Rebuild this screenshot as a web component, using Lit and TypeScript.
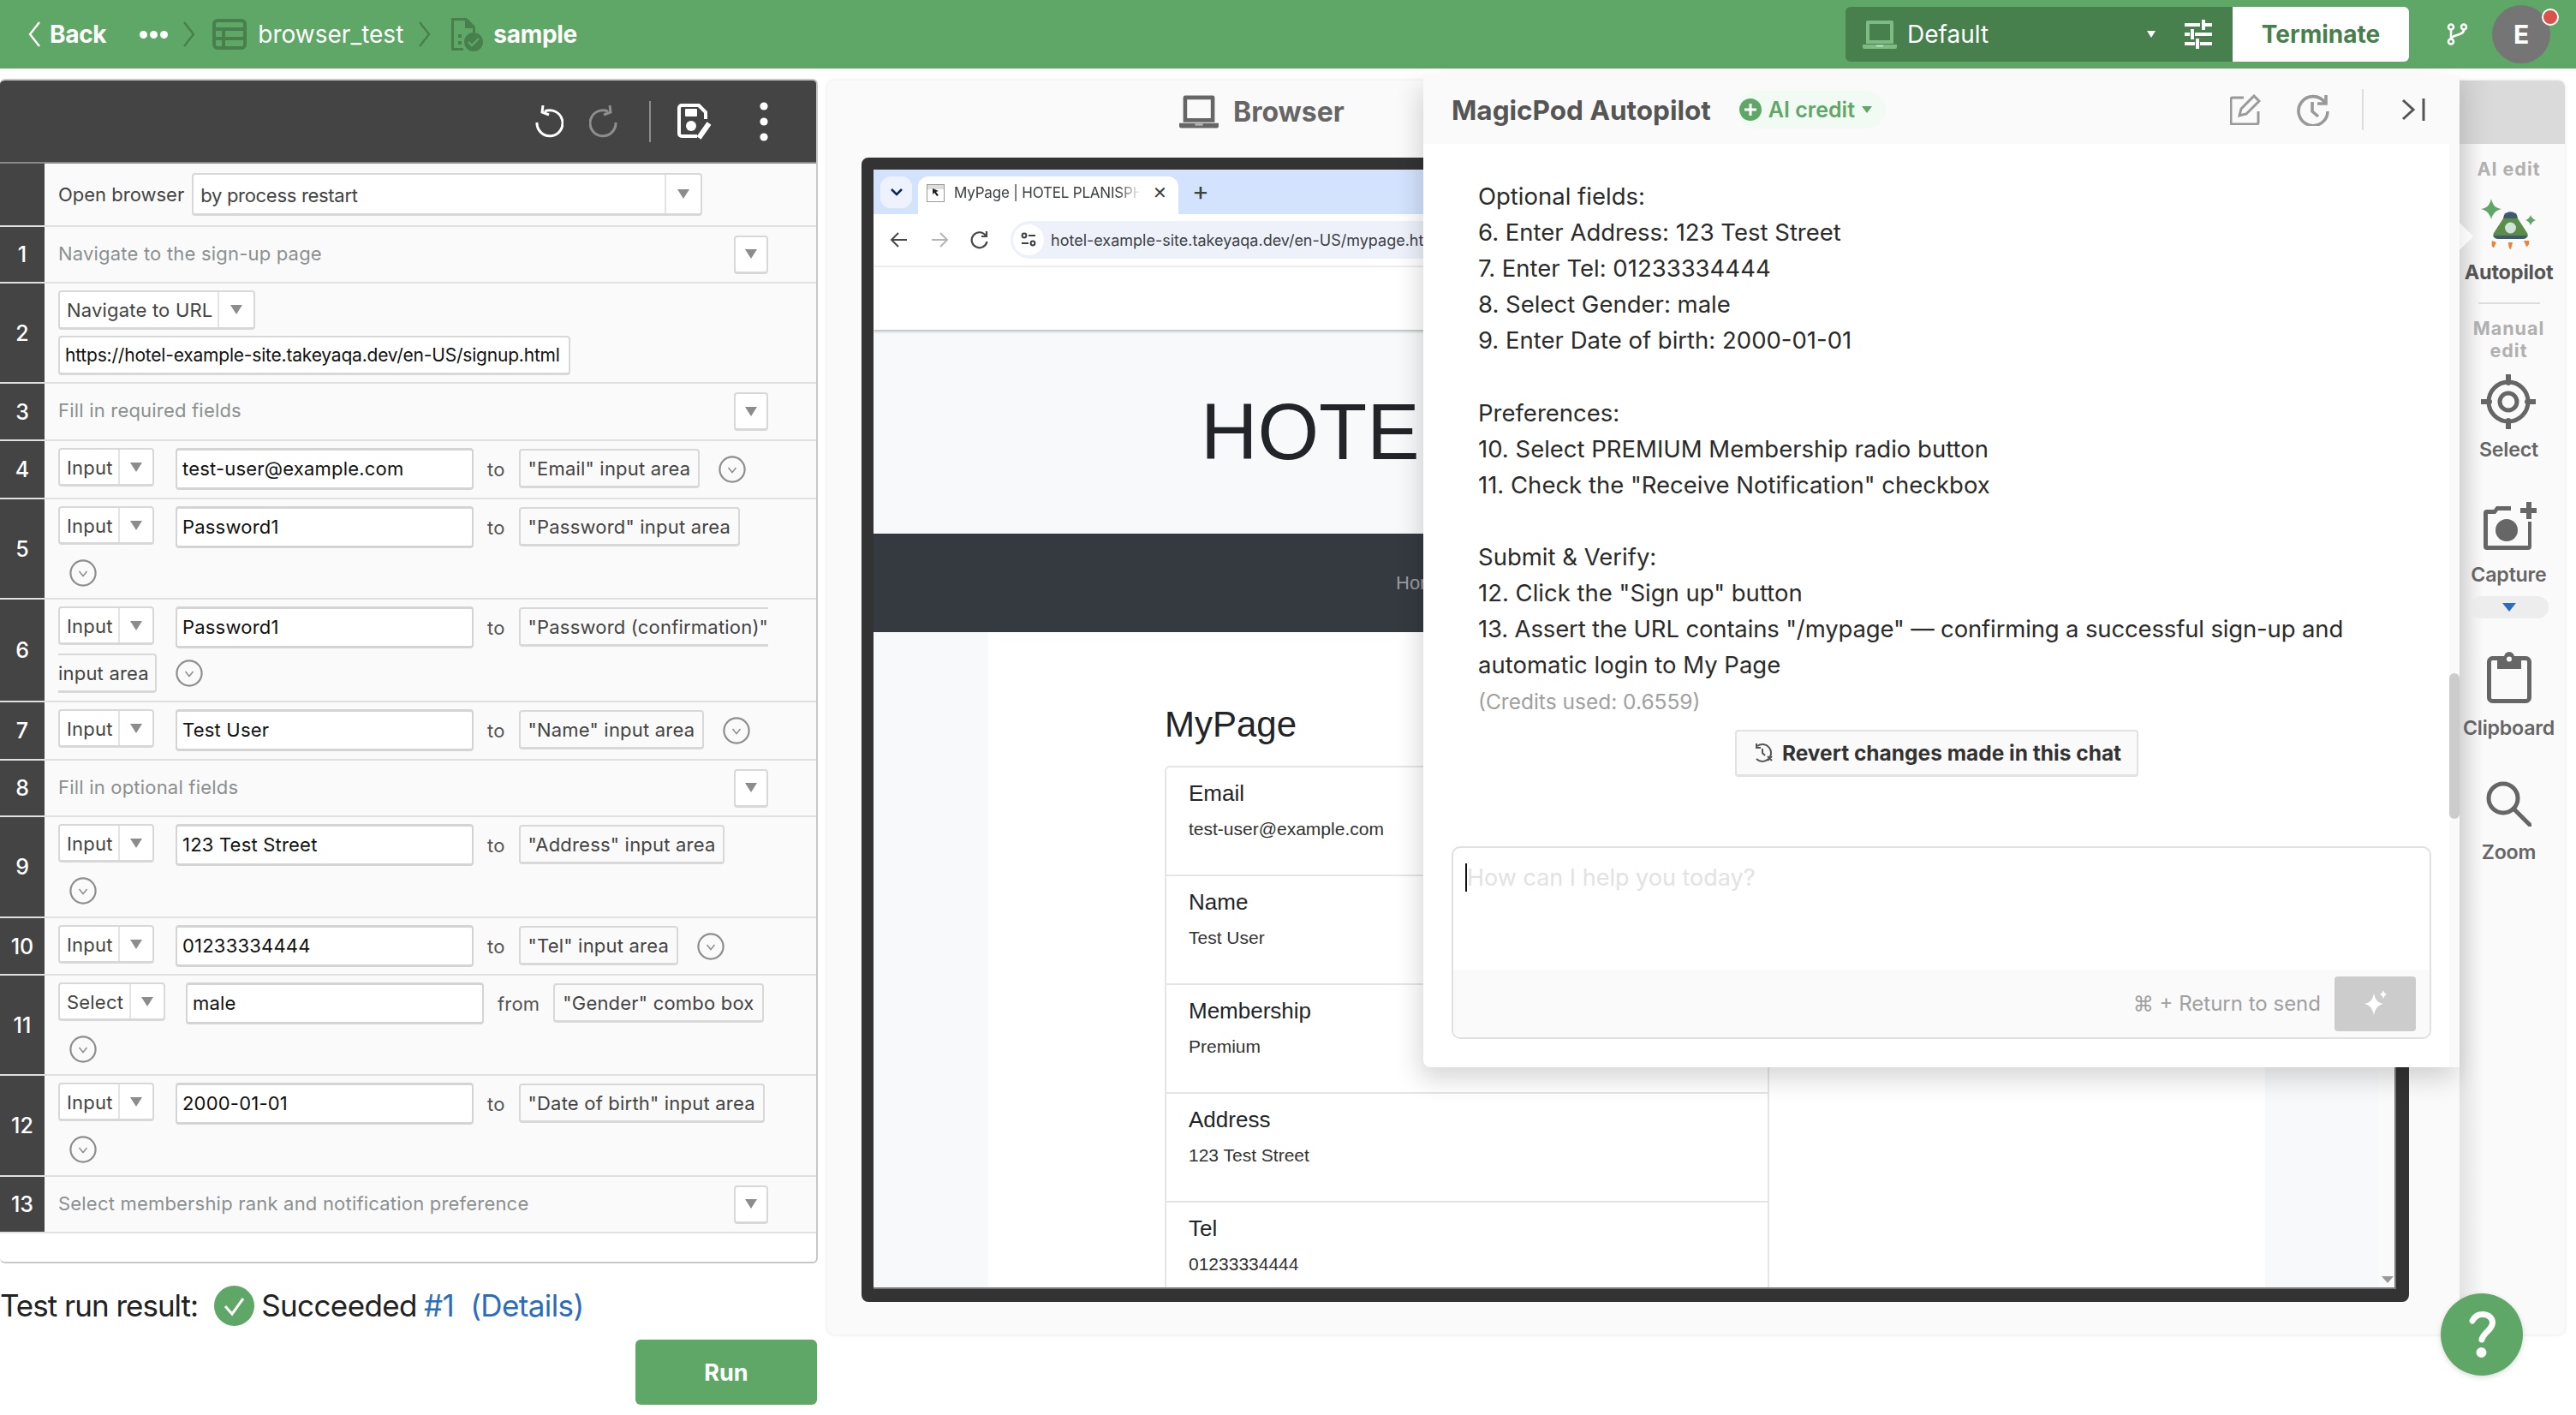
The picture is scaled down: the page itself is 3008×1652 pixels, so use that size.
import { LitElement, html, css, svg } from "lit";
import { customElement } from "lit/decorators.js";

type Cmd = {
  n: string;
  h: number;
  cmd: string;
  cmdW: number;
  value: string;
  word?: string;
  target: string;
};

const chevronRight = (c: string) => html`<svg class="crumb" width="16" height="34" viewBox="0 0 16 34" fill="none" stroke=${c} stroke-width="2.4"><path d="M2 3l11 14L2 31" /></svg>`;

const caret = html`<svg width="14" height="11" viewBox="0 0 14 11"><path d="M0 0h14L7 11z" fill="#8c8c8c" /></svg>`;

const circleDown = html`<svg class="circ" width="32" height="32" viewBox="0 0 32 32" fill="none" stroke="#8e8e8e"><circle cx="16" cy="16" r="14.6" stroke-width="2.2" /><path d="M11.5 14l4.5 5.5 4.5-5.5" stroke-width="1.5" /></svg>`;

const laptop = (c: string) => svg`<path d="M6 2h28a2 2 0 012 2v25H4V4a2 2 0 012-2zm2 4v19h24V6z" fill=${c} fill-rule="evenodd" /><path d="M0 30h40v3a2 2 0 01-2 2H2a2 2 0 01-2-2z" fill=${c} /><rect x="16" y="30.5" width="8" height="2" fill="#fff" opacity=".5" />`;

@customElement("step-row")
class StepRow extends LitElement {
  static properties = { data: { attribute: false } };
  data!: Cmd;

  static styles = css`
    :host {
      display: flex;
      border-bottom: 2px solid #e0e0e0;
      box-sizing: border-box;
      background: #fafafa;
    }
    .num {
      width: 52px;
      flex: none;
      background: #444;
      color: #fff;
      font: 500 25px Inter, sans-serif;
      display: flex;
      align-items: center;
      justify-content: center;
    }
    .body {
      flex: 1;
      box-sizing: border-box;
      display: flex;
      flex-wrap: wrap;
      align-content: flex-start;
      align-items: flex-start;
      padding: 8px 30px 0 16px;
      row-gap: 12px;
      min-width: 0;
      letter-spacing: 0.2px;
    }
    .body.split {
      row-gap: 4px;
    }
    .sel {
      height: 45px;
      box-sizing: border-box;
      border: 2px solid #d8d8d8;
      border-bottom-width: 3px;
      border-radius: 4px;
      background: #fff;
      display: flex;
      align-items: center;
      font-size: 22px;
      color: #444;
      padding: 2px 0 0 8px;
      position: relative;
      margin-right: 25px;
    }
    .sel.tight {
      margin-right: 24px;
    }
    .sel .arr {
      position: absolute;
      right: 0;
      top: 0;
      bottom: 0;
      width: 38px;
      border-left: 2px solid #e4e4e4;
      display: flex;
      align-items: center;
      justify-content: center;
    }
    .val {
      width: 348px;
      height: 49px;
      box-sizing: border-box;
      border: 2px solid #d4d4d4;
      border-top-width: 3px;
      border-bottom-width: 3px;
      border-radius: 4px;
      background: #fff;
      display: flex;
      align-items: center;
      padding: 0 0 2px 6px;
      color: #111;
      font-size: 22px;
    }
    .word {
      margin: 0 16px;
      color: #555;
      font-size: 22px;
      line-height: 50px;
    }
    .tgt {
      height: 46px;
      margin-top: 1px;
      box-sizing: border-box;
      border: 2px solid #d8d8d8;
      border-bottom-width: 3px;
      border-radius: 4px;
      display: flex;
      align-items: center;
      padding: 0 9px;
      color: #444;
      font-size: 22px;
      white-space: nowrap;
    }
    .tgt.first {
      border-right: none;
      border-radius: 4px 0 0 4px;
      width: 291px;
      padding-right: 0;
    }
    .tgt.second {
      border-left: none;
      border-radius: 0 4px 4px 0;
      padding-left: 0;
      width: 115px;
    }
    .circ {
      margin: 9px 0 0 22px;
    }
    .wrap-circ {
      flex-basis: 100%;
      height: 32px;
      display: flex;
      margin-left: 13px;
    }
    .wrap-circ .circ {
      margin: 0;
    }
    .split .circ {
      margin-top: 8px;
    }
  `;

  render() {
    const d = this.data;
    const split = d.n === "6";
    const wraps = ["5", "9", "11", "12"].includes(d.n);
    return html`
      <div class="num">${d.n}</div>
      <div class="body ${split ? "split" : ""}" style="height:${d.h}px">
        <div class="sel ${d.word === "from" ? "tight" : ""}" style="width:${d.cmdW}px">${d.cmd}<span class="arr">${caret}</span></div>
        <div class="val">${d.value}</div>
        <span class="word">${d.word ?? "to"}</span>
        ${split
          ? html`<div class="tgt first">"Password (confirmation)"</div>
              <div class="tgt second">input area</div>
              ${circleDown}`
          : html`<div class="tgt">${d.target}</div>`}
        ${!split && !wraps ? circleDown : ""}
        ${wraps ? html`<div class="wrap-circ">${circleDown}</div>` : ""}
      </div>
    `;
  }
}

@customElement("app-root")
export class AppRoot extends LitElement {
  static styles = css`
    :host {
      display: block;
      width: 3008px;
      height: 1652px;
      position: relative;
      overflow: hidden;
      background: #fff;
      font-family: Inter, "Noto Sans", sans-serif;
      color: #333;
    }
    /* top bar */
    .topbar {
      height: 80px;
      background: #5fa766;
      display: flex;
      align-items: center;
      color: #fff;
      font-size: 28px;
      padding-left: 32px;
      box-sizing: border-box;
    }
    .topbar b {
      font-weight: 700;
      letter-spacing: -0.3px;
    }
    .crumb {
      flex: none;
    }
    .back-label {
      margin-left: 10px;
    }
    .dots {
      margin: 0 17px 0 39px;
      display: flex;
      gap: 3px;
    }
    .dots i {
      width: 9px;
      height: 9px;
      border-radius: 50%;
      background: #fff;
    }
    .bt {
      margin: 0 17px 0 13px;
    }
    .grow {
      flex: 1;
    }
    .env {
      width: 452px;
      height: 64px;
      background: #47804d;
      border-radius: 6px 0 0 6px;
      display: flex;
      align-items: center;
      padding-left: 20px;
      box-sizing: border-box;
    }
    .env span {
      margin-left: 12px;
      font-size: 28px;
      flex: 1;
    }
    .env .tri {
      margin-right: 34px;
    }
    .terminate {
      width: 206px;
      height: 64px;
      background: #fff;
      border-radius: 0 6px 6px 0;
      color: #47804d;
      font-weight: 700;
      font-size: 28px;
      display: flex;
      align-items: center;
      justify-content: center;
    }
    .avatar {
      width: 68px;
      height: 68px;
      background: #757575;
      border-radius: 50%;
      margin: 0 30px 0 28px;
      position: relative;
      display: flex;
      align-items: center;
      justify-content: center;
      font-weight: 700;
      font-size: 30px;
    }
    .avatar::after {
      content: "";
      position: absolute;
      right: -10px;
      top: 4px;
      width: 16px;
      height: 16px;
      border-radius: 50%;
      background: #d9534a;
      border: 2px solid #fff;
    }
    /* page body */
    .main {
      display: flex;
      align-items: flex-start;
      padding-top: 12px;
      gap: 11px;
    }
    .left {
      width: 955px;
      flex: none;
    }
    .editor {
      height: 1383px;
      box-sizing: border-box;
      border: 2px solid #c4c8cc;
      border-left: none;
      border-radius: 6px;
      overflow: hidden;
    }
    .edit-bar {
      height: 95px;
      background: #444;
      border-bottom: 2px solid #888;
      display: flex;
      align-items: center;
      justify-content: flex-end;
      box-sizing: content-box;
      position: relative;
    }
    .open-row {
      height: 74px;
    }
    .comment {
      flex: 1;
      display: flex;
      align-items: center;
      padding: 0 0 3px 16px;
      color: #8a9090;
      font-size: 22px;
      letter-spacing: 0.2px;
    }
    .fold {
      width: 40px;
      height: 45px;
      box-sizing: border-box;
      background: #fff;
      border: 2px solid #d8d8d8;
      border-bottom-width: 3px;
      border-radius: 4px;
      display: flex;
      align-items: center;
      justify-content: center;
      margin-right: 56px;
    }
    .fold-wrap {
      display: flex;
      align-items: center;
    }
    .row {
      display: flex;
      border-bottom: 2px solid #e0e0e0;
      box-sizing: border-box;
      background: #fafafa;
    }
    .row .num {
      width: 52px;
      flex: none;
      background: #444;
      color: #fff;
      font: 500 25px Inter, sans-serif;
      display: flex;
      align-items: center;
      justify-content: center;
    }
    .row .inner {
      flex: 1;
      display: flex;
      align-items: center;
      padding-left: 16px;
      min-width: 0;
    }
    .row .inner.stack {
      flex-direction: column;
      align-items: flex-start;
      justify-content: center;
      gap: 7px;
    }
    .ctl {
      box-sizing: border-box;
      height: 50px;
      background: #fff;
      border: 2px solid #d8d8d8;
      border-bottom-width: 3px;
      border-radius: 4px;
      display: flex;
      align-items: center;
      font-size: 22px;
      color: #444;
      position: relative;
      padding-left: 8px;
    }
    .ctl.wide {
      width: 596px;
      padding-top: 2px;
      letter-spacing: -0.3px;
    }
    .ctl.nav {
      width: 230px;
      height: 46px;
      letter-spacing: 0.2px;
    }
    .ctl.addr {
      width: 598px;
      height: 46px;
      color: #111;
      padding-left: 6px;
      font-size: 21px;
      letter-spacing: -0.2px;
    }
    .ctl .arr {
      position: absolute;
      right: 0;
      top: 0;
      bottom: 0;
      width: 40px;
      border-left: 2px solid #e4e4e4;
      display: flex;
      align-items: center;
      justify-content: center;
    }
    .label {
      font-size: 22px;
      color: #444;
      margin-right: 9px;
    }
    .result {
      display: flex;
      align-items: center;
      box-sizing: border-box;
      height: 89px;
      padding-top: 9px;
      font-size: 35px;
      color: #222;
      letter-spacing: -0.6px;
    }
    .result .lead {
      letter-spacing: -1px;
    }
    .result svg {
      margin: 0 8px 0 19px;
    }
    .result a {
      color: #2a6ebb;
      margin-left: 8px;
    }
    .result a + a {
      margin-left: 19px;
    }
    .run {
      margin-left: 742px;
      width: 212px;
      height: 76px;
      background: #5fa766;
      border-radius: 6px;
      color: #fff;
      font-weight: 700;
      font-size: 27px;
      display: flex;
      align-items: center;
      justify-content: center;
    }
    .sep {
      width: 2px;
      height: 48px;
      background: #8e8e8e;
      margin: 0 30px 0 36px;
    }
    /* browser panel */
    .panel {
      margin-top: 2px;
      width: 2029px;
      height: 1464px;
      flex: none;
      background: #fafafa;
      border-radius: 8px;
      box-shadow: 0 0 4px rgba(0, 0, 0, 0.12);
      display: flex;
      overflow: hidden;
    }
    .stage {
      width: 1906px;
      flex: none;
      padding-left: 40px;
      box-sizing: border-box;
    }
    .stage-title {
      height: 90px;
      box-sizing: border-box;
      padding: 0 0 18px 371px;
      display: flex;
      align-items: center;
      font-weight: 700;
      font-size: 32px;
      color: #666;
    }
    .stage-title svg {
      margin-right: 17px;
    }
    .frame {
      width: 1807px;
      height: 1336px;
      box-sizing: border-box;
      border: solid #333;
      border-width: 14px 15px 15px 14px;
      border-radius: 8px;
      background: #f8f9fa;
      overflow: hidden;
      position: relative;
    }
    .tabs {
      height: 52px;
      background: #d3e3fd;
      display: flex;
      align-items: flex-end;
      padding-left: 8px;
    }
    .tabs .drop {
      width: 37px;
      height: 37px;
      margin-bottom: 7px;
      border-radius: 12px;
      background: #edf2fd;
      display: flex;
      align-items: center;
      justify-content: center;
    }
    .tab {
      margin-left: 7px;
      width: 304px;
      height: 44px;
      background: #fff;
      border-radius: 12px 12px 0 0;
      display: flex;
      align-items: center;
      font: 400 17px Inter, sans-serif;
      letter-spacing: -0.2px;
      color: #3c4043;
      padding: 0 0 6px 10px;
      box-sizing: border-box;
      white-space: nowrap;
    }
    .tab .title {
      width: 218px;
      margin-left: 11px;
      overflow: hidden;
      -webkit-mask-image: linear-gradient(90deg, #000 88%, transparent);
      mask-image: linear-gradient(90deg, #000 88%, transparent);
    }
    .tab .x {
      margin-left: 14px;
      font-size: 20px;
    }
    .plus {
      margin: 0 0 7px 16px;
      font: 400 30px Inter, sans-serif;
      color: #3c4043;
      height: 37px;
      line-height: 34px;
    }
    .chrome {
      height: 60px;
      background: #fff;
      border-bottom: 2px solid #eee;
      box-sizing: content-box;
      display: flex;
      align-items: center;
      padding-left: 19px;
      gap: 25px;
    }
    .url {
      flex: 1;
      height: 44px;
      border-radius: 22px;
      background: #edf2fa;
      display: flex;
      align-items: center;
      font-size: 18px;
      color: #3c4043;
      white-space: nowrap;
    }
    .url .pip {
      width: 36px;
      height: 36px;
      border-radius: 50%;
      background: #fff;
      margin: 0 8px 0 3px;
      display: flex;
      align-items: center;
      justify-content: center;
    }
    .site-nav {
      height: 73px;
      background: #fff;
      box-shadow: 0 2px 3px rgba(0, 0, 0, 0.25);
      position: relative;
    }
    .site-title {
      height: 238px;
      display: flex;
      align-items: center;
      padding-left: 382px;
      font: 400 92px "Liberation Sans", sans-serif;
      color: #212529;
      white-space: nowrap;
    }
    .site-menu {
      height: 115px;
      background: #343a40;
      color: #9a9da0;
      display: flex;
      align-items: center;
      padding-left: 610px;
      font: 400 22px "Liberation Sans", sans-serif;
    }
    .site-body {
      display: flex;
      height: 767px;
      box-sizing: border-box;
      border-bottom: 2px solid #777;
      overflow: hidden;
    }
    .site-card {
      margin-left: 134px;
      width: 1491px;
      background: #fff;
      padding: 0 0 0 206px;
      box-sizing: border-box;
      font-family: "Liberation Sans", sans-serif;
      flex: none;
    }
    .site-card h2 {
      margin: 0;
      height: 156px;
      display: flex;
      align-items: center;
      padding-top: 60px;
      box-sizing: border-box;
      font-weight: 400;
      font-size: 42px;
      color: #212529;
    }
    .list {
      width: 706px;
      border: 2px solid #e4e5e7;
      border-bottom: none;
      border-radius: 6px 6px 0 0;
      box-sizing: border-box;
    }
    .item {
      height: 127px;
      box-sizing: border-box;
      border-bottom: 2px solid #e4e5e7;
      padding: 12px 0 0 26px;
    }
    .item .k {
      font-size: 26px;
      line-height: 36px;
      color: #212529;
    }
    .item .v {
      font-size: 21px;
      line-height: 28px;
      margin-top: 10px;
      color: #333;
    }
    .track {
      margin-left: 132px;
      width: 19px;
      background: #fafafa;
      flex: none;
      position: relative;
      border-right: 2px solid #777;
      box-sizing: content-box;
    }
    .track svg {
      position: absolute;
      right: 1px;
      bottom: 5px;
    }
    /* tools column */
    .tools {
      flex: 1;
      min-width: 0;
      padding-right: 8px;
      display: flex;
      flex-direction: column;
      align-items: center;
      background: linear-gradient(90deg, #e2e2e2, #fafafa 28px);
      position: relative;
      font-size: 23.2px;
      font-weight: 600;
      color: #666;
    }
    .tools .cap {
      align-self: stretch;
      height: 74px;
      margin-right: -8px;
      background: linear-gradient(90deg, #cfcfcf, #dadada 40px);
      flex: none;
    }
    .tools .mini {
      color: #b0b0b0;
      font-size: 21.5px;
      font-weight: 700;
      letter-spacing: 1px;
      line-height: 26px;
      text-align: center;
    }
    .tools .tool {
      display: flex;
      flex-direction: column;
      align-items: center;
      line-height: 30px;
      letter-spacing: -0.2px;
    }
    .tools .pilot {
      margin-top: 12px;
      font-weight: 700;
      color: #555;
      font-size: 23.500px;
    }
    .tools hr {
      width: 72px;
      height: 2px;
      background: #ddd;
      border: none;
      margin: 20px 0 15px;
    }
    .tools .pill {
      width: 92px;
      height: 26px;
      border-radius: 13px;
      background: #ededed;
      margin-top: 10px;
      display: flex;
      align-items: center;
      justify-content: center;
    }
    .notch {
      position: absolute;
      left: 0;
      top: 166px;
      width: 0;
      height: 0;
      border: solid transparent;
      border-width: 16px 0 16px 16px;
      border-left-color: #fff;
    }
    /* chat popover */
    .chat {
      position: absolute;
      left: 1662px;
      top: 88px;
      width: 1210px;
      height: 1158px;
      background: #fff;
      border-radius: 0 0 8px 8px;
      box-shadow: -4px 14px 30px rgba(0, 0, 0, 0.16);
      display: flex;
      flex-direction: column;
    }
    .chat-head {
      height: 80px;
      background: #fafafa;
      display: flex;
      align-items: center;
      padding-left: 33px;
      flex: none;
    }
    .chat-head h1 {
      margin: 0;
      font-size: 31.5px;
      font-weight: 700;
      color: #555;
    }
    .credit {
      margin-left: 31px;
      height: 44px;
      border-radius: 22px;
      background: #f2faf4;
      display: flex;
      align-items: center;
      padding: 0 16px 0 2px;
      gap: 8px;
      color: #5fa766;
      font-size: 25px;
      font-weight: 600;
    }
    .chat-tools {
      margin-left: auto;
      display: flex;
      align-items: center;
    }
    .chat-tools .vr {
      width: 2px;
      height: 48px;
      background: #ddd;
      margin: 0 44px 0 38px;
    }
    .chat-body {
      flex: 1;
      padding: 0 33px;
      position: relative;
      display: flex;
      flex-direction: column;
    }
    .chat-body::after {
      content: "";
      position: absolute;
      right: 0;
      top: 0;
      bottom: 0;
      width: 12px;
      background: #fafafa;
    }
    .scroller {
      position: absolute;
      right: 0;
      top: 618px;
      width: 12px;
      height: 170px;
      border-radius: 6px;
      background: #ccc;
      z-index: 1;
    }
    .msg {
      padding: 40px 30px 0 31px;
      font-size: 27.5px;
      line-height: 42.1px;
      color: #2b2b2b;
      white-space: pre-line;
    }
    .msg .snug {
      letter-spacing: -0.15px;
    }
    .used {
      padding-left: 31px;
      color: #a0a0a0;
      font-size: 24.5px;
      line-height: 44px;
    }
    .revert-line {
      display: flex;
      justify-content: center;
      margin-top: 11px;
      padding-right: 12px;
    }
    .revert {
      width: 471px;
      height: 55px;
      box-sizing: border-box;
      border: 2px solid #e2e2e2;
      border-bottom-width: 3px;
      border-radius: 4px;
      background: #fafafa;
      display: flex;
      align-items: center;
      justify-content: center;
      gap: 10px;
      padding-left: 2px;
      font-size: 24.500px;
      font-weight: 700;
      color: #333;
    }
    .input {
      margin-top: 81px;
      width: 1144px;
      height: 225px;
      box-sizing: border-box;
      border: 2px solid #e0e0e0;
      border-radius: 10px;
      display: flex;
      flex-direction: column;
      overflow: hidden;
    }
    .ph {
      height: 142px;
      flex: none;
      box-sizing: border-box;
      padding: 18px 0 0 16px;
      color: #e2e2e2;
      font-size: 27px;
      line-height: 33px;
      display: flex;
    }
    .ph i {
      width: 2px;
      height: 33px;
      background: #111;
      margin-left: -2px;
    }
    .input-foot {
      flex: 1;
      background: #fafafa;
      display: flex;
      align-items: center;
      justify-content: flex-end;
      padding-right: 16px;
      color: #a0a0a0;
      font-size: 24px;
      gap: 16px;
    }
    .send {
      width: 95px;
      height: 64px;
      border-radius: 4px;
      background: #ccc;
      display: flex;
      align-items: center;
      justify-content: center;
    }
    .help {
      position: absolute;
      left: 2850px;
      top: 1510px;
      width: 96px;
      height: 96px;
      border-radius: 50%;
      background: #5fa766;
      box-shadow: 0 2px 6px rgba(0, 0, 0, 0.15);
      display: flex;
      align-items: center;
      justify-content: center;
    }
  `;

  private steps: Cmd[] = [
    { n: "4", h: 66, cmd: "Input", cmdW: 112, value: "test-user@example.com", target: '"Email" input area' },
    { n: "5", h: 115, cmd: "Input", cmdW: 112, value: "Password1", target: '"Password" input area' },
    { n: "6", h: 118, cmd: "Input", cmdW: 112, value: "Password1", target: "" },
    { n: "7", h: 66, cmd: "Input", cmdW: 112, value: "Test User", target: '"Name" input area' },
  ];

  private steps2: Cmd[] = [
    { n: "9", h: 116, cmd: "Input", cmdW: 112, value: "123 Test Street", target: '"Address" input area' },
    { n: "10", h: 65, cmd: "Input", cmdW: 112, value: "01233334444", target: '"Tel" input area' },
    { n: "11", h: 115, cmd: "Select", cmdW: 125, value: "male", word: "from", target: '"Gender" combo box' },
    { n: "12", h: 116, cmd: "Input", cmdW: 112, value: "2000-01-01", target: '"Date of birth" input area' },
  ];

  private comment(n: string, text: string, h = 66) {
    return html`<div class="row" style="height:${h}px">
      <div class="num">${n}</div>
      <div class="comment">${text}</div>
      <div class="fold-wrap"><div class="fold">${caret}</div></div>
    </div>`;
  }

  private topbar() {
    return html`<div class="topbar">
      <svg width="16" height="34" viewBox="0 0 16 34" fill="none" stroke="#fff" stroke-width="2.4"><path d="M14 3L3 17l11 14" /></svg>
      <b class="back-label">Back</b>
      <div class="dots"><i></i><i></i><i></i></div>
      ${chevronRight("#47804d")}
      <svg style="margin-left:19px" width="40" height="36" viewBox="0 0 40 36" fill="none" stroke="#47804d" stroke-width="4"><rect x="2" y="2" width="36" height="32" rx="4" /><path d="M2 12h36M2 23h36M13 12v22" /></svg>
      <span class="bt">browser_test</span>
      ${chevronRight("#47804d")}
      <svg style="margin-left:20px" width="40" height="40" viewBox="0 0 40 40"><path d="M3 1h18l10 10v8h-3v-6H19V4H6v32h11v3H3z" fill="#47804d" /><rect x="11" y="20" width="4" height="4" fill="#47804d" /><rect x="11" y="28" width="4" height="4" fill="#47804d" /><circle cx="29" cy="29" r="11" fill="#47804d" /><path d="M23 29l4 4 8-8" stroke="#5fa766" stroke-width="2.4" fill="none" /></svg>
      <b style="margin-left:12px">sample</b>
      <div class="grow"></div>
      <div class="env">
        <svg width="40" height="36" viewBox="0 0 40 36">${laptop("#7dbb83")}</svg>
        <span>Default</span>
        <svg class="tri" width="10" height="8" viewBox="0 0 10 8"><path d="M0 0h10L5 8z" fill="#fff" /></svg>
        <svg width="32" height="34" viewBox="0 0 32 34" stroke="#fff" stroke-width="4" fill="none"><path d="M0 6h18M24 6h8M22 0v12M0 17h6M12 17h20M9 11v12M0 28h12M18 28h14M15 22v12" /></svg>
        <div style="width:24px"></div>
      </div>
      <div class="terminate">Terminate</div>
      <svg style="margin-left:44px" width="25" height="26" viewBox="0 0 25 26" fill="none" stroke="#fff" stroke-width="2.600"><circle cx="5" cy="4.500" r="3" /><circle cx="20" cy="4.500" r="3" /><circle cx="5" cy="21.500" r="3" /><path d="M5 8v10M20 8c0 7-15 5-15 11" /></svg>
      <div class="avatar">E</div>
    </div>`;
  }

  private editor() {
    return html`<div class="editor">
      <div class="edit-bar">
        <svg style="margin-right:30px" width="34" height="38" viewBox="0 0 34 38" fill="none" stroke="#fff" stroke-width="3"><path d="M12 7a15 15 0 11-9 13" /><path d="M10 0l-1 8 8 3" stroke-width="3" /></svg>
        <svg width="34" height="38" viewBox="0 0 34 38" fill="none" stroke="#8e8e8e" stroke-width="3"><path d="M22 7a15 15 0 10 9 13" /><path d="M24 0l1 8-8 3" /></svg>
        <div class="sep"></div>
        <svg width="42" height="42" viewBox="0 0 42 42" fill="none"><path d="M6 2h20l8 8v8M24 38H6a3 3 0 01-3-3V5a3 3 0 013-3" stroke="#fff" stroke-width="4" /><rect x="10" y="6" width="14" height="9" rx="1" fill="#fff" /><circle cx="17" cy="26" r="6" fill="#fff" /><path d="M26 40l12-17" stroke="#fff" stroke-width="6" /></svg>
        <svg style="margin:0 56px 0 55px" width="10" height="46" viewBox="0 0 10 46" fill="#fff"><circle cx="5" cy="5" r="4.6" /><circle cx="5" cy="23" r="4.6" /><circle cx="5" cy="41" r="4.6" /></svg>
      </div>
      <div class="row open-row">
        <div class="num"></div>
        <div class="inner">
          <span class="label">Open browser</span>
          <div class="ctl wide">by process restart<span class="arr">${caret}</span></div>
        </div>
      </div>
      ${this.comment("1", "Navigate to the sign-up page")}
      <div class="row" style="height:117px">
        <div class="num">2</div>
        <div class="inner stack">
          <div class="ctl nav">Navigate to URL<span class="arr">${caret}</span></div>
          <div class="ctl addr">https://hotel-example-site.takeyaqa.dev/en-US/signup.html</div>
        </div>
      </div>
      ${this.comment("3", "Fill in required fields", 67)}
      ${this.steps.map((s) => html`<step-row .data=${s}></step-row>`)}
      ${this.comment("8", "Fill in optional fields")}
      ${this.steps2.map((s) => html`<step-row .data=${s}></step-row>`)}
      ${this.comment("13", "Select membership rank and notification preference")}
    </div>
    <div class="result">
      <span class="lead">Test run result:</span>
      <svg width="47" height="47" viewBox="0 0 47 47"><circle cx="23.5" cy="23.5" r="23.5" fill="#5fa766" /><path d="M13 24l8 9 13-18" fill="none" stroke="#fff" stroke-width="3" /></svg>
      Succeeded <a>#1</a><a>(Details)</a>
    </div>
    <div class="run">Run</div>`;
  }

  private browser() {
    const items = [
      ["Email", "test-user@example.com"],
      ["Name", "Test User"],
      ["Membership", "Premium"],
      ["Address", "123 Test Street"],
      ["Tel", "01233334444"],
    ];
    return html`<div class="stage">
      <div class="stage-title">
        <svg width="46" height="42" viewBox="0 0 40 36">${laptop("#666")}</svg>
        Browser
      </div>
      <div class="frame">
        <div class="tabs">
          <div class="drop"><svg width="14" height="9" viewBox="0 0 14 9" fill="none" stroke="#0b2a5b" stroke-width="2.6"><path d="M1 1l6 6 6-6" /></svg></div>
          <div class="tab">
            <svg width="21" height="21" viewBox="0 0 21 21"><rect x=".5" y=".5" width="20" height="20" fill="#fff" stroke="#999" /><rect x="1" y="1" width="19" height="5" fill="#ddd" /><path d="M7 5l7 3-3 1 3 4-2 1-3-4-2 2z" fill="#222" /></svg>
            <div class="title">MyPage | HOTEL PLANISPH</div>
            <span class="x">✕</span>
          </div>
          <div class="plus">+</div>
        </div>
        <div class="chrome">
          <svg width="22" height="22" viewBox="0 0 22 22" fill="none" stroke="#474747" stroke-width="2"><path d="M20 11H3M10 3l-8 8 8 8" /></svg>
          <svg width="22" height="22" viewBox="0 0 22 22" fill="none" stroke="#b5b5b5" stroke-width="2"><path d="M2 11h17M12 3l8 8-8 8" /></svg>
          <svg width="22" height="22" viewBox="0 0 22 22" fill="none" stroke="#474747" stroke-width="2.2"><path d="M18 6a9 9 0 101.5 7" /><path d="M19 1v6h-6" /></svg>
          <div class="url">
            <span class="pip"><svg width="20" height="20" viewBox="0 0 20 20" fill="none" stroke="#3c4043" stroke-width="2"><circle cx="5" cy="5" r="2.4" /><path d="M10 5h8M2 14h8" /><circle cx="15" cy="14" r="2.4" /></svg></span>
            hotel-example-site.takeyaqa.dev/en-US/mypage.html
          </div>
        </div>
        <div class="site-nav"></div>
        <div class="site-title">HOTEL PLANISPHERE</div>
        <div class="site-menu">Home</div>
        <div class="site-body">
          <div class="site-card">
            <h2>MyPage</h2>
            <div class="list">
              ${items.map(([k, v]) => html`<div class="item"><div class="k">${k}</div><div class="v">${v}</div></div>`)}
            </div>
          </div>
          <div class="track"><svg width="14" height="8" viewBox="0 0 14 8"><path d="M0 0h14L7 8z" fill="#999" /></svg></div>
        </div>
      </div>
    </div>`;
  }

  private tools() {
    return html`<div class="tools">
      <div class="cap"></div>
      <div class="notch"></div>
      <div class="mini" style="margin-top:16px">AI edit</div>
      <svg style="margin-top:21px" width="66" height="60" viewBox="0 0 66 60">
        <path d="M12 1c2 8 5 11 12 12-7 2-10 5-12 12-2-7-5-10-12-12 7-1 10-4 12-12z" fill="#5fa766" />
        <path d="M58 20c1 3 3 5 6 6-3 1-5 3-6 6-1-3-3-5-6-6 3-1 5-3 6-6z" fill="#5fa766" />
        <path d="M27 20c3-5 12-5 15 0l1 4H26z" fill="#3d5a6e" />
        <path d="M26 24h17l11 17c2 4 0 6-4 6H19c-4 0-6-2-4-6z" fill="#5a8e48" />
        <path d="M15 44c1 3 2 4 5 4h29c3 0 4-1 5-4z" fill="#3d5a6e" />
        <circle cx="34.500" cy="35" r="6.500" fill="#cfe3da" />
        <path d="M13 50l5 2-3 6c-2 0-3-2-2-8zM32 52h5l-2 8c-2 0-3-3-3-8zM50 50l6 0c1 4-1 7-3 7z" fill="#ec8433" />
      </svg>
      <div class="tool pilot">Autopilot</div>
      <hr />
      <div class="mini">Manual<br />edit</div>
      <div class="tool" style="margin-top:15px">
        <svg width="64" height="64" viewBox="0 0 64 64" fill="none" stroke="#666"><circle cx="32" cy="32" r="23" stroke-width="5" /><circle cx="32" cy="32" r="10" stroke-width="5" /><path d="M32 1v9M32 54v9M1 32h9M54 32h9" stroke-width="6" stroke-linecap="round" /></svg>
        <span style="margin-top:9px">Select</span>
      </div>
      <div class="tool" style="margin-top:45px">
        <svg width="64" height="58" viewBox="0 0 64 58"><path d="M6 10h8l3-4h17v5H19l-3 4H7v37h47V24h4v29a4 4 0 01-4 4H6a4 4 0 01-4-4V14a4 4 0 014-4z" fill="#666" /><circle cx="29" cy="34" r="13" fill="#666" /><path d="M52 1h6v7h6v6h-6v7h-6v-7h-7V8h7z" fill="#666" /></svg>
        <span style="margin-top:13px">Capture</span>
        <div class="pill"><svg width="16" height="10" viewBox="0 0 16 10"><path d="M0 0h16L8 10z" fill="#2a6ebb" /></svg></div>
      </div>
      <div class="tool" style="margin-top:39px">
        <svg width="52" height="60" viewBox="0 0 52 60"><rect x="2.500" y="7.500" width="47" height="50" rx="4" fill="none" stroke="#666" stroke-width="5" /><path d="M12 6h8a6 6 0 0112 0h8v14H12z" fill="#666" /><circle cx="26" cy="8.500" r="3" fill="#fafafa" /></svg>
        <span style="margin-top:14px">Clipboard</span>
      </div>
      <div class="tool" style="margin-top:46px">
        <svg width="54" height="54" viewBox="0 0 54 54" fill="none" stroke="#666" stroke-width="5"><circle cx="21" cy="21" r="17" /><path d="M33 33l19 19" stroke-linecap="round" /></svg>
        <span style="margin-top:15px">Zoom</span>
      </div>
    </div>`;
  }

  private chat() {
    return html`<div class="chat">
      <div class="chat-head">
        <h1>MagicPod Autopilot</h1>
        <div class="credit">
          <svg width="26" height="26" viewBox="0 0 26 26"><circle cx="13" cy="13" r="13" fill="#5fa766" /><path d="M13 6v14M6 13h14" stroke="#fff" stroke-width="3" /></svg>
          AI credit
          <svg width="12" height="8" viewBox="0 0 12 8"><path d="M0 0h12L6 8z" fill="#5fa766" /></svg>
        </div>
        <div class="chat-tools">
          <svg width="36" height="36" viewBox="0 0 36 36" fill="none" stroke="#999" stroke-width="3"><path d="M16 4H3a2 2 0 00-2 2v27a2 2 0 002 2h28a2 2 0 002-2V20" /><path d="M11 25l2-8L28 2l6 6-15 15z" /></svg>
          <svg style="margin-left:42px" width="38" height="38" viewBox="0 0 38 38" fill="none" stroke="#999" stroke-width="3.6"><path d="M33 11a17 17 0 10 3 10" /><path d="M34 2v10H24M18 10v11l7 6" /></svg>
          <div class="vr"></div>
          <svg style="margin-right:40px" width="28" height="28" viewBox="0 0 28 28" fill="none" stroke="#555" stroke-width="3"><path d="M2 3l12 11L2 25M26 1v26" /></svg>
        </div>
      </div>
      <div class="chat-body">
        <div class="scroller"></div>
        <div class="msg">Optional fields:
6. Enter Address: 123 Test Street
7. Enter Tel: 01233334444
8. Select Gender: male
9. Enter Date of birth: 2000-01-01

Preferences:
10. Select PREMIUM Membership radio button
11. Check the "Receive Notification" checkbox

Submit &amp; Verify:
12. Click the "Sign up" button
<span class="snug">13. Assert the URL contains "/mypage" — confirming a successful sign-up and</span>
automatic login to My Page</div>
        <div class="used">(Credits used: 0.6559)</div>
        <div class="revert-line">
          <div class="revert">
            <svg width="24" height="24" viewBox="0 0 24 24" fill="none" stroke="#555" stroke-width="2"><path d="M5 4a10 10 0 11-1 15M4 1v5h5M11 7v5l3 3M17 16l5 5M22 16l-5 5" /></svg>
            Revert changes made in this chat
          </div>
        </div>
        <div class="input">
          <div class="ph"><i></i>How can I help you today?</div>
          <div class="input-foot">
            ⌘ + Return to send
            <div class="send"><svg width="30" height="32" viewBox="0 0 30 32" fill="#fff"><path d="M13 4c2 8 4 10 11 12-7 2-9 5-11 13-2-8-4-11-11-13 7-2 9-4 11-12z" /><path d="M24 0c1 3 2 4 4 5-2 1-3 2-4 5-1-3-2-4-4-5 2-1 3-2 4-5z" /></svg></div>
          </div>
        </div>
      </div>
    </div>`;
  }

  render() {
    return html`
      ${this.topbar()}
      <div class="main">
        <div class="left">${this.editor()}</div>
        <div class="panel">${this.browser()}${this.tools()}</div>
      </div>
      ${this.chat()}
      <div class="help">
        <svg width="31" height="54" viewBox="0 0 31 54" fill="none" stroke="#fff" stroke-width="7" stroke-linecap="round"><path d="M4 11C7 5 11 3.500 16 3.500 23 3.500 27.500 8 27.500 13 27.500 22 17 24 15 33" /><circle cx="14.500" cy="48" r="2.500" fill="#fff" /></svg>
      </div>
    `;
  }
}
